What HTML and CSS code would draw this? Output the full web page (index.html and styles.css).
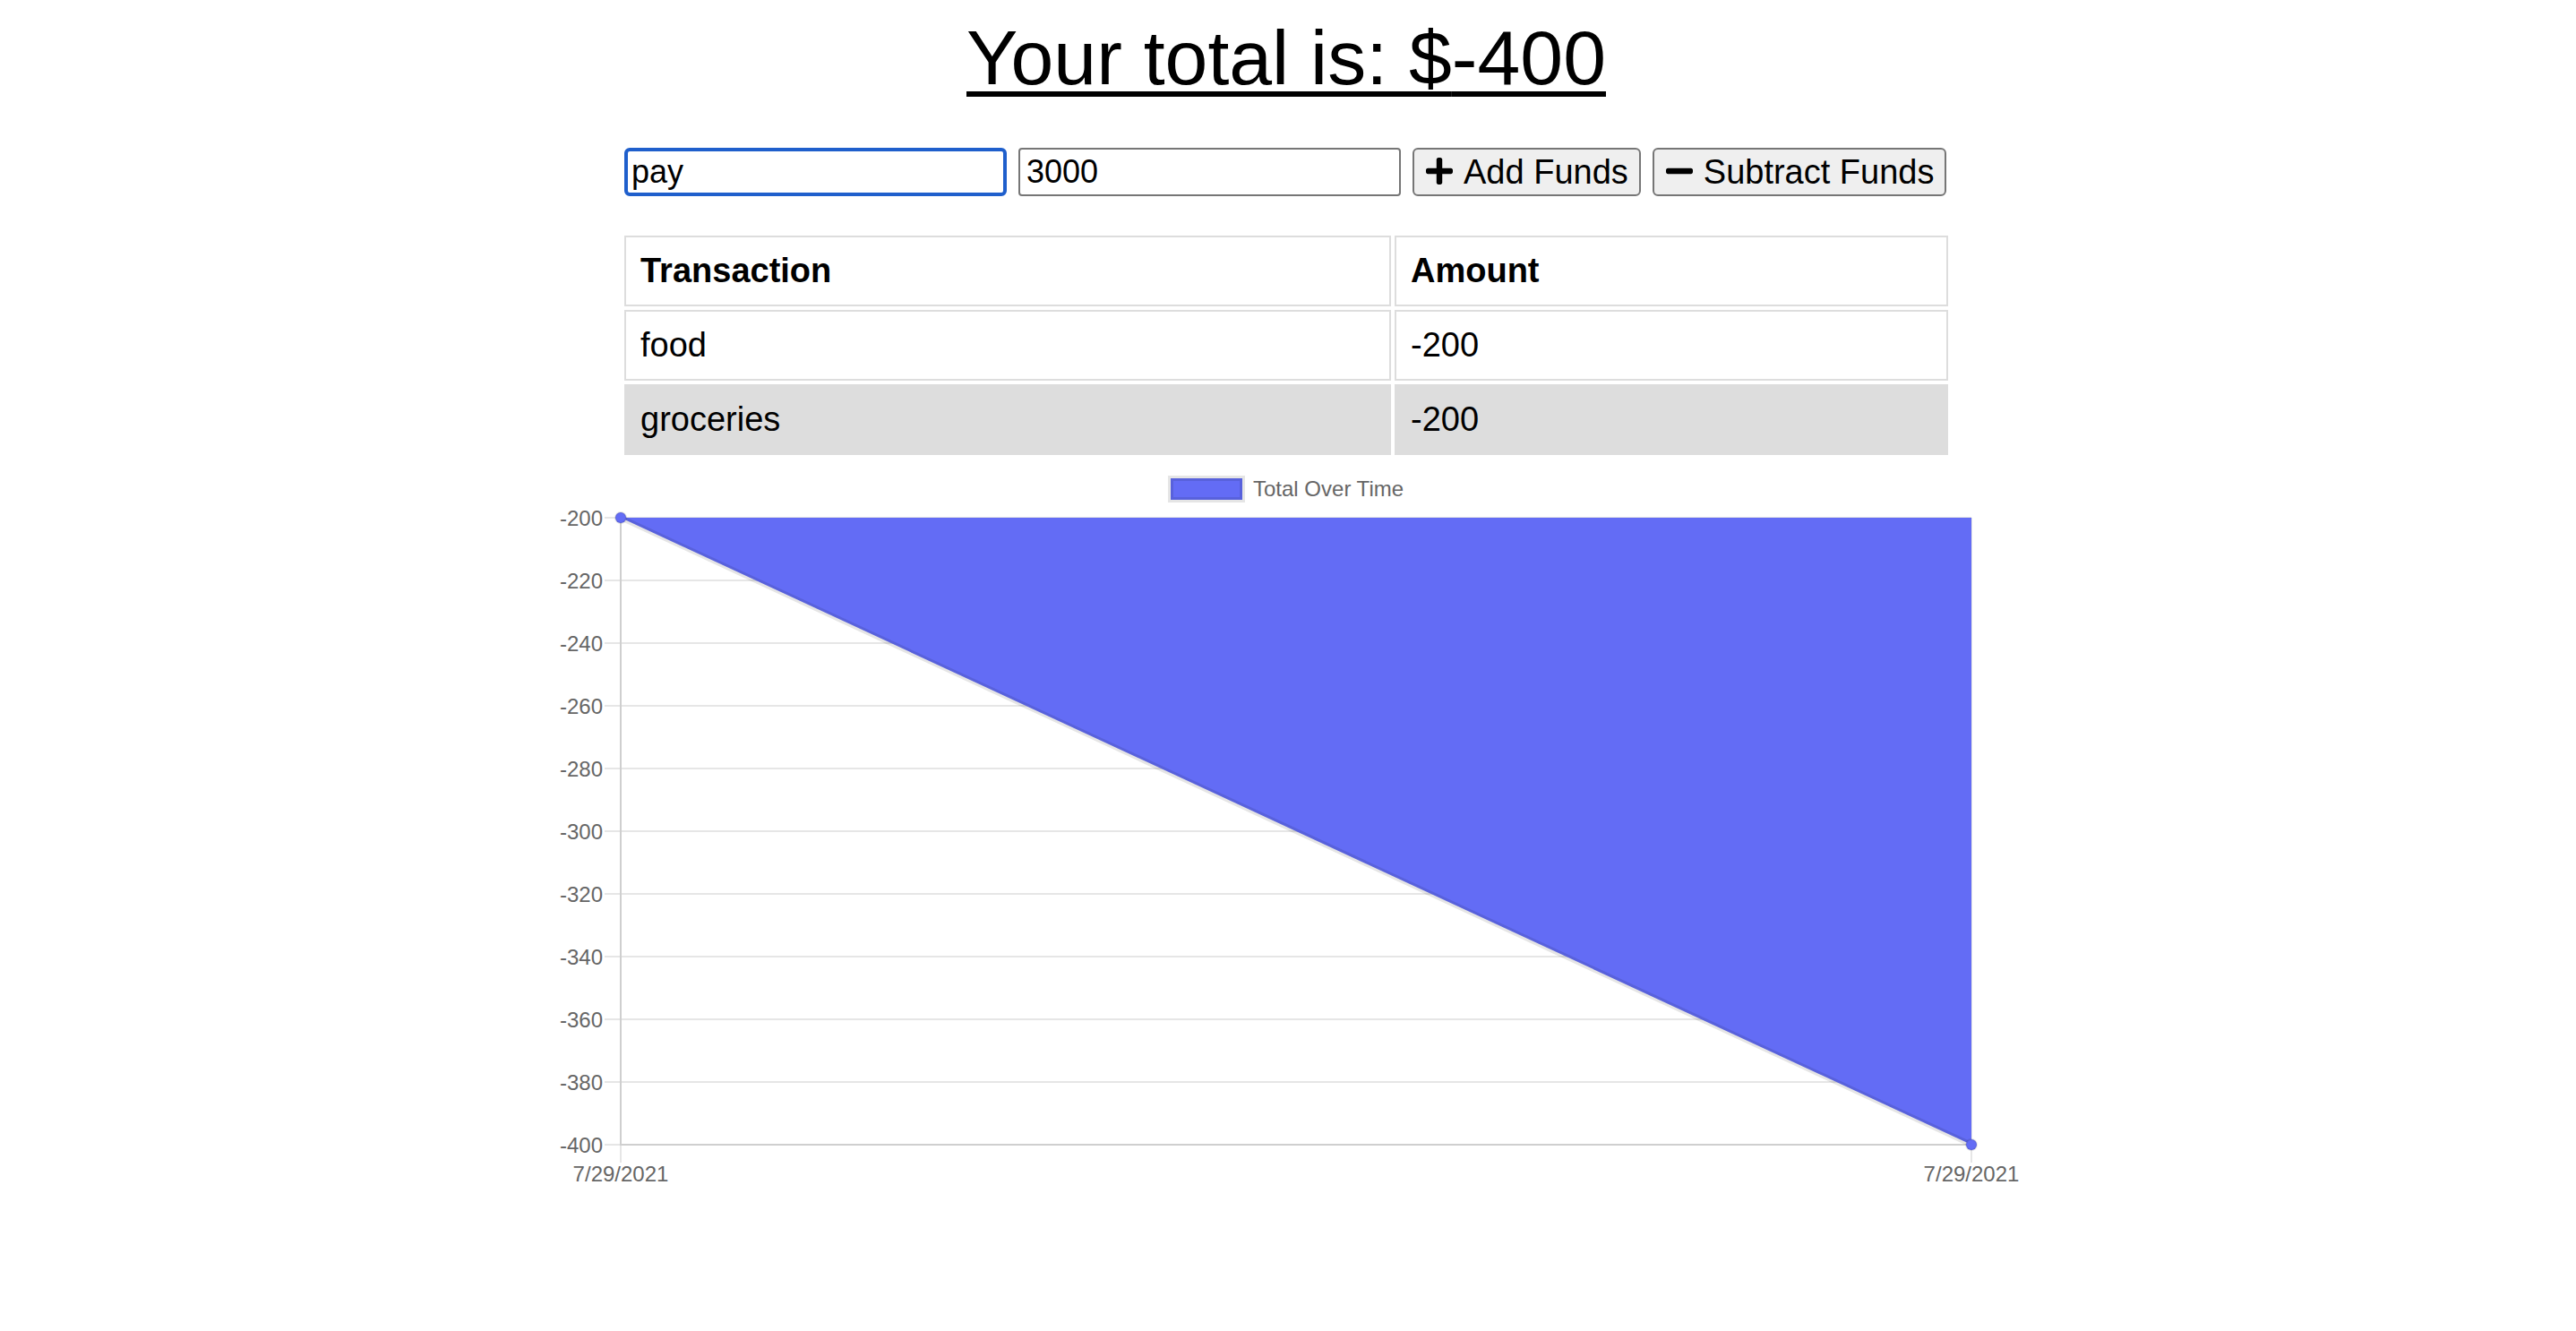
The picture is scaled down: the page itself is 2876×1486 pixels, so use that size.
FILE: index.html
```html
<!DOCTYPE html>
<html lang="en">
<head>
<meta charset="utf-8">
<title>Budget Tracker</title>
<link rel="stylesheet" href="styles.css">
</head>
<body>
<main class="page">
  <h1 class="total">Your total is: $<span class="total-amount">-400</span></h1>

  <form class="entry-form">
    <input class="field field-focused" type="text" value="pay">
    <input class="field" type="number" value="3000">
    <button class="btn" type="button">
      <svg class="btn-icon" viewBox="0 32 448 448" aria-hidden="true"><path d="M416 208H272V64c0-17.67-14.33-32-32-32h-32c-17.67 0-32 14.33-32 32v144H32c-17.67 0-32 14.330-32 32v32c0 17.67 14.33 32 32 32h144v144c0 17.67 14.33 32 32 32h32c17.67 0 32-14.33 32-32V304h144c17.67 0 32-14.33 32-32v-32c0-17.67-14.33-32-32-32z"/></svg>
      <span>Add Funds</span>
    </button>
    <button class="btn" type="button">
      <svg class="btn-icon" viewBox="0 32 448 448" aria-hidden="true"><path d="M416 208H32c-17.67 0-32 14.33-32 32v32c0 17.67 14.33 32 32 32h384c17.67 0 32-14.33 32-32v-32c0-17.67-14.33-32-32-32z"/></svg>
      <span>Subtract Funds</span>
    </button>
  </form>

  <table class="ledger">
    <colgroup>
      <col class="col-name">
      <col class="col-amount">
    </colgroup>
    <thead>
      <tr><th>Transaction</th><th>Amount</th></tr>
    </thead>
    <tbody>
      <tr><td>food</td><td>-200</td></tr>
      <tr class="row-alt"><td>groceries</td><td>-200</td></tr>
    </tbody>
  </table>

  <svg class="chart" width="1636" height="830" viewBox="0 0 1636 830">
    <g class="legend">
      <rect x="687" y="22" width="80" height="24" fill="#636cf5" stroke="rgba(0,0,0,0.1)" stroke-width="6"/>
      <text x="779" y="42" class="chart-text">Total Over Time</text>
    </g>
    <g class="grid" stroke="#e6e6e6" stroke-width="2">
      <line x1="55" y1="66" x2="1581" y2="66"/>
      <line x1="55" y1="136" x2="1581" y2="136"/>
      <line x1="55" y1="206" x2="1581" y2="206"/>
      <line x1="55" y1="276" x2="1581" y2="276"/>
      <line x1="55" y1="346" x2="1581" y2="346"/>
      <line x1="55" y1="416" x2="1581" y2="416"/>
      <line x1="55" y1="486" x2="1581" y2="486"/>
      <line x1="55" y1="556" x2="1581" y2="556"/>
      <line x1="55" y1="626" x2="1581" y2="626"/>
      <line x1="55" y1="696" x2="1581" y2="696"/>
      <line x1="55" y1="766" x2="73" y2="766"/>
      <line x1="73" y1="766" x2="73" y2="786"/>
      <line x1="1581" y1="66" x2="1581" y2="786"/>
    </g>
    <g stroke="#cfcfcf" stroke-width="2">
      <line x1="73" y1="766" x2="1582" y2="766"/>
      <line x1="73" y1="66" x2="73" y2="767"/>
    </g>
    <polygon points="73,66 1581,766 1581,66" fill="#636cf5"/>
    <line x1="73" y1="66" x2="1581" y2="766" stroke="rgba(0,0,0,0.1)" stroke-width="6"/>
    <circle cx="73" cy="66" r="6" fill="#636cf5" stroke="rgba(0,0,0,0.1)" stroke-width="2"/>
    <circle cx="1581" cy="766" r="6" fill="#636cf5" stroke="rgba(0,0,0,0.1)" stroke-width="2"/>
    <g class="chart-text" text-anchor="end">
      <text x="53" y="74.5">-200</text>
      <text x="53" y="144.5">-220</text>
      <text x="53" y="214.5">-240</text>
      <text x="53" y="284.5">-260</text>
      <text x="53" y="354.5">-280</text>
      <text x="53" y="424.5">-300</text>
      <text x="53" y="494.5">-320</text>
      <text x="53" y="564.5">-340</text>
      <text x="53" y="634.5">-360</text>
      <text x="53" y="704.5">-380</text>
      <text x="53" y="774.5">-400</text>
    </g>
    <g class="chart-text" text-anchor="middle">
      <text x="73" y="807">7/29/2021</text>
      <text x="1581" y="807">7/29/2021</text>
    </g>
  </svg>
</main>
</body>
</html>
```

FILE: styles.css
```css
html, body {
  margin: 0;
  padding: 0;
  background: #ffffff;
}

body {
  font-family: "Liberation Sans", Arial, Helvetica, sans-serif;
  color: #000000;
}

.page {
  display: flex;
  flex-direction: column;
  align-items: center;
  padding-right: 4px;
}

.total {
  margin: 16px 0 0;
  font-size: 86px;
  line-height: 96px;
  font-weight: normal;
  text-decoration: underline;
  text-decoration-thickness: 6px;
  text-underline-offset: 8px;
}

.entry-form {
  display: flex;
  align-items: center;
  width: 1478px;
  margin-top: 53px;
}

.field {
  box-sizing: border-box;
  width: 427px;
  height: 54px;
  margin: 0 13px 0 0;
  padding: 0 7px;
  border: 2px solid #767676;
  border-radius: 4px;
  font-family: "Liberation Sans", Arial, sans-serif;
  font-size: 36px;
  color: #000000;
  background: #ffffff;
  outline: none;
  -moz-appearance: textfield;
}

.field::-webkit-outer-spin-button,
.field::-webkit-inner-spin-button {
  -webkit-appearance: none;
  margin: 0;
}

.field-focused {
  border: 4px solid #1f5fcc;
  border-radius: 6px;
  padding: 0 4px;
}

.btn {
  box-sizing: border-box;
  display: inline-flex;
  align-items: center;
  gap: 12px;
  height: 54px;
  margin: 0 13px 0 0;
  padding: 0 12px 0 13px;
  border: 2px solid #767676;
  border-radius: 6px;
  background: #efefef;
  font-family: "Liberation Sans", Arial, sans-serif;
  font-size: 38px;
  color: #000000;
}

.btn:last-child {
  margin-right: 0;
}

.btn-icon {
  width: 30px;
  height: 30px;
  fill: #000000;
  flex: none;
  margin-top: -2px;
}

.ledger {
  width: 1486px;
  margin-top: 40px;
  border-collapse: separate;
  border-spacing: 4px;
  table-layout: fixed;
  font-size: 38px;
}

.col-name {
  width: 856px;
}

.col-amount {
  width: 618px;
}

.ledger th,
.ledger td {
  border: 2px solid #dddddd;
  padding: 16px 16px;
  line-height: 43px;
  text-align: left;
}

.ledger th {
  font-weight: bold;
}

.row-alt td {
  background: #dddddd;
}

.chart {
  display: block;
  margin-left: 4px;
}

.chart-text {
  font-family: "Liberation Sans", Arial, Helvetica, sans-serif;
  font-size: 24px;
  fill: #666666;
}
```
